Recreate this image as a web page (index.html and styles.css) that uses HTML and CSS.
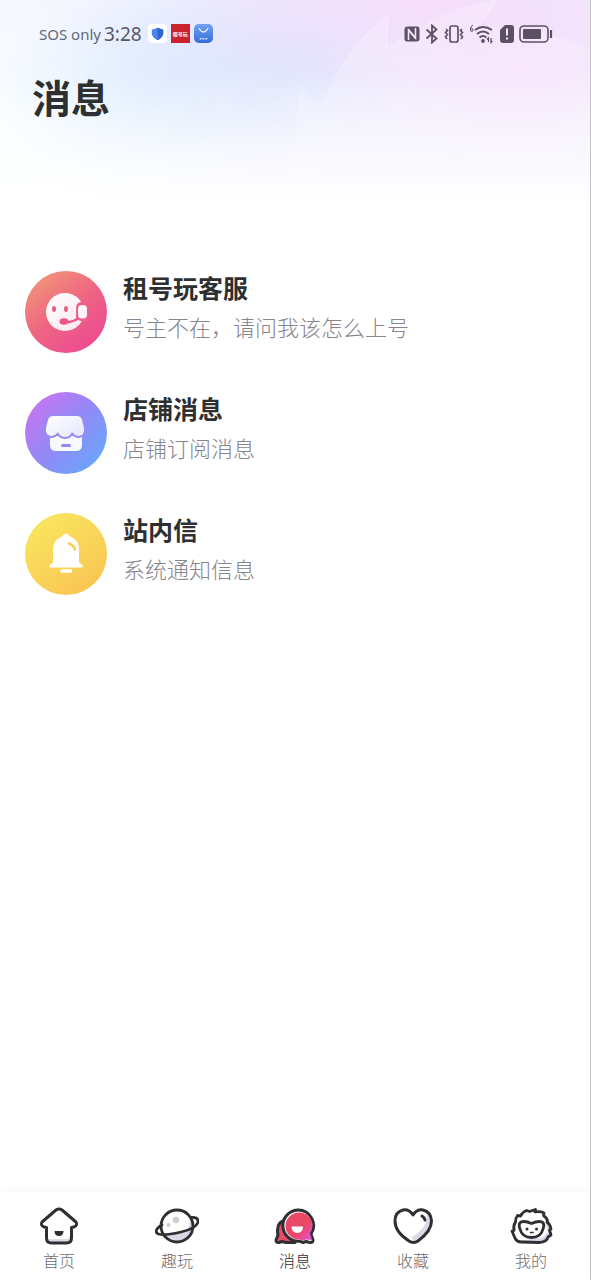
FILE: index.html
```html
<!DOCTYPE html>
<html lang="zh-CN">
<head>
<meta charset="utf-8">
<meta name="viewport" content="width=device-width, initial-scale=1">
<title>消息</title>
<link rel="stylesheet" href="styles.css">
</head>
<body>
<div class="page">
  <header class="header">
    <svg class="header-art" viewBox="0 0 591 210" preserveAspectRatio="xMaxYMin slice" aria-hidden="true">
      <defs>
        <linearGradient id="art" x1="0" y1="0" x2="0" y2="1">
          <stop offset="0" stop-color="#fff" stop-opacity=".2"/>
          <stop offset=".6" stop-color="#fff" stop-opacity=".2"/>
          <stop offset="1" stop-color="#fff" stop-opacity="0"/>
        </linearGradient>
      </defs>
      <path fill="url(#art)" d="M300 210Q293 130 304 84Q311 97 319 104Q324 104 329 96Q348 48 390 15L389 48Q432 15 497 0Q491 14 477 27Q538 25 591 48V210Z"/>
      <path fill="none" stroke="#fff" stroke-opacity=".3" d="M329 96Q348 48 390 15L389 48M432 22Q460 7 497 1Q491 14 477 27M560 40Q575 50 591 53M562 65Q580 69 591 82"/>
    </svg>
    <div class="status">
      <div class="status-left">
        <span class="carrier">SOS only</span>
        <span class="clock">3:28</span>
        <svg class="app" viewBox="0 0 20 20" aria-hidden="true"><rect width="20" height="20" rx="4" fill="#fff"/><path fill="#4a86ec" d="M10 4l6 2v4q0 4-6 7-6-3-6-7V6z"/><path fill="#3264d2" d="M10 4l6 2v4q0 4-6 7z"/></svg>
        <span class="app app-red">租号玩</span>
        <svg class="app" viewBox="0 0 20 20" aria-hidden="true"><defs><linearGradient id="store" x2="0" y2="1"><stop stop-color="#72a3ef"/><stop offset="1" stop-color="#376cdc"/></linearGradient></defs><rect width="20" height="20" rx="5" fill="url(#store)"/><path d="M5.500 5q4.500 7 9 0" fill="none" stroke="#fff" stroke-width="1.300" stroke-linecap="round"/><path d="M6 15.500h2M9 15.500h2M12 15.500h2" stroke="#dce9ff" stroke-width="1.500"/></svg>
      </div>
      <div class="status-right">
        <svg width="16" height="18" viewBox="0 0 16 18" aria-label="NFC"><path d="M4 1.500h9q2.500 0 2.500 3V14q0 2.500-3 2.500H3Q.5 16.500.5 14V4.500q0-3 3.500-3z" fill="#5c5163"/><path d="M4.500 15V5l7 8.500M11.500 3v10L4.500 4.500" fill="none" stroke="#f2e6fb" stroke-width="1.600"/></svg>
        <svg width="14" height="20" viewBox="0 0 14 20" aria-label="蓝牙"><path d="M1.500 5.500l10 9L7 18.500v-17l4.500 4-10 9" fill="none" stroke="#5c5163" stroke-width="1.800"/></svg>
        <svg width="20" height="20" viewBox="0 0 20 20" aria-label="振动"><rect x="6" y="2" width="8" height="16" rx="2" fill="none" stroke="#5c5163" stroke-width="1.700"/><path d="M2 5l1.500 1.500L1.500 8.500 3.500 10.500 1.500 12.500 3 15M18 5l-1.500 1.500 2 2-2 2 2 2L17 15" fill="none" stroke="#5c5163" stroke-width="1.600"/></svg>
        <svg width="26" height="20" viewBox="0 0 26 20" aria-label="Wi-Fi 6"><path d="M4 1Q1.500 2 1.500 5v1q0 1.500 1.300 1.500T4.100 6 2.800 4.500 1.500 6" fill="none" stroke="#5c5163"/><g fill="none" stroke="#5c5163" stroke-width="2"><path d="M6 6q8-6 17 0M8 10q6-5 12 0M10.500 13.500q3.500-3 7 0"/></g><circle cx="14" cy="17" r="1.900" fill="#5c5163"/><path d="M19.500 18v-4l-1.500 1.500M22 14v4.500l1.500-1.500" fill="none" stroke="#5c5163" stroke-width="1.200"/></svg>
        <svg width="14" height="18" viewBox="0 0 14 18" aria-label="SIM 卡异常"><path fill="#5c5163" d="M5 0h6q3 0 3 3v12q0 3-3 3H3q-3 0-3-3V5z"/><path d="M7 3.500v7M7 12.500v2" stroke="#f2e6fb" stroke-width="2"/></svg>
        <svg width="34" height="18" viewBox="0 0 34 18" aria-label="电量"><rect x="1" y="1" width="28" height="16" rx="4" fill="none" stroke="#5c5163" stroke-width="1.600"/><rect x="4" y="4" width="18" height="10" rx="1" fill="#5c5163"/><path d="M32 5v8" stroke="#5c5163" stroke-width="2.200"/></svg>
      </div>
    </div>
    <h1 class="title">消息</h1>
  </header>

  <main class="list">
    <a class="item" href="#service">
      <svg class="avatar" viewBox="0 0 82 82" aria-hidden="true">
        <defs><linearGradient id="g1" x1=".15" y1=".1" x2=".8" y2=".95"><stop stop-color="#f1917a"/><stop offset=".5" stop-color="#ee6482"/><stop offset="1" stop-color="#ec4a92"/></linearGradient>
        <linearGradient id="w1" x2="1" y2="1"><stop stop-color="#fff"/><stop offset="1" stop-color="#fbe6f0"/></linearGradient></defs>
        <circle cx="41" cy="41" r="41" fill="url(#g1)"/>
        <circle cx="40" cy="41" r="19" fill="url(#w1)"/>
        <ellipse cx="29" cy="38" rx="2" ry="3" fill="#e9607f"/><ellipse cx="41" cy="38" rx="2" ry="3" fill="#e9607f"/>
        <path d="M51 37q0-5 5-6h7v19h-7q-5-1-5-5z" fill="#ed6186"/>
        <path d="M53 47q-4 4.500-14 4" fill="none" stroke="#eb5588" stroke-width="2.500"/>
        <ellipse cx="39" cy="50.500" rx="4.500" ry="3.300" fill="#eb5588"/>
        <rect x="53" y="34" width="9" height="13.500" rx="4" fill="#fff5fa"/>
      </svg>
      <div class="item-text"><h2 class="item-title">租号玩客服</h2><p class="item-desc">号主不在，请问我该怎么上号</p></div>
    </a>
    <a class="item" href="#shop">
      <svg class="avatar" viewBox="0 0 82 82" aria-hidden="true">
        <defs><linearGradient id="g2" x1=".12" y1=".15" x2=".88" y2=".85"><stop stop-color="#c177f1"/><stop offset=".5" stop-color="#9389f7"/><stop offset="1" stop-color="#6ca4fb"/></linearGradient>
        <linearGradient id="w2" x2="1" y2="1"><stop stop-color="#fff"/><stop offset="1" stop-color="#e4e6fd"/></linearGradient></defs>
        <circle cx="41" cy="41" r="41" fill="url(#g2)"/>
        <path d="M25 43h32v10q0 6-6 6H31q-6 0-6-6z" fill="#f8f8ff"/>
        <path d="M28 24h24q4 0 5 4l2 8q1 7-5 8-4 0-7-4-2 5-7 5t-7-5q-3 4-7 4-6-1-5-8l2-8q1-4 5-4z" fill="url(#w2)" stroke="#948bf5" stroke-width="4" paint-order="stroke"/>
        <path d="M37.500 53.500h7" stroke="#9288f4" stroke-width="3" stroke-linecap="round"/>
      </svg>
      <div class="item-text"><h2 class="item-title">店铺消息</h2><p class="item-desc">店铺订阅消息</p></div>
    </a>
    <a class="item" href="#inbox">
      <svg class="avatar" viewBox="0 0 82 82" aria-hidden="true">
        <defs><linearGradient id="g3" x1=".2" y1=".05" x2=".8" y2=".95"><stop stop-color="#f9e55f"/><stop offset="1" stop-color="#f9c553"/></linearGradient></defs>
        <circle cx="41" cy="41" r="41" fill="url(#g3)"/>
        <path d="M37 23.500q2-3 4-3t4 3q9 3 9 13v13l3 2q2 3-1 3H26q-3 0-1-3l3-2v-13q0-10 9-13z" fill="#fff"/>
        <path d="M44 30.500q4.500 1.500 6 6" fill="none" stroke="#f6ce59" stroke-width="2.600" stroke-linecap="round"/>
        <path d="M37 58h8.500" stroke="#fff" stroke-width="3.600" stroke-linecap="round"/>
      </svg>
      <div class="item-text"><h2 class="item-title">站内信</h2><p class="item-desc">系统通知信息</p></div>
    </a>
  </main>

  <nav class="tabs">
    <a class="tab" href="#home">
      <svg class="tab-icon" viewBox="0 0 44 40" aria-hidden="true"><path d="M26 5l12 11q2 3-2 5l-3 .5V29q0 4-4 4H11q1 3 4 3h14q5 0 5-5V21.500l3-.5q3-2 1-5z" fill="#d9dae6"/><path d="M19 4q3-2 6 0l14 12q2 3-2 5l-2.500.5V32q0 5-5 5h-15q-5 0-5-5V21.500L7 21q-4-2-2-5z" fill="none" stroke="#2d2f31" stroke-width="3" stroke-linejoin="round"/><path d="M17.500 25h9q0 5-4.500 5t-4.500-5z" fill="#2d2f31"/></svg>
      <span>首页</span>
    </a>
    <a class="tab" href="#fun">
      <svg class="tab-icon" viewBox="0 0 44 40" aria-hidden="true"><path d="M34 9q2 13-4 16t-18 5q14 10 23 1 7-12-1-22z" fill="#d9dae6"/><circle cx="21" cy="14" r="3.200" fill="#cfcfd2"/><circle cx="13.500" cy="19" r="2" fill="#cfcfd2"/><circle cx="22" cy="20" r="16" fill="none" stroke="#2d2f31" stroke-width="2.800"/><path d="M36 11.500q7-.5 7 3.500 0 7-17 11Q4 31 1.500 26.500 0 23 7 19" fill="none" stroke="#2d2f31" stroke-width="2.800" stroke-linecap="round"/></svg>
      <span>趣玩</span>
    </a>
    <a class="tab tab-active" href="#messages" aria-current="page">
      <svg class="tab-icon" viewBox="0 0 44 40" aria-hidden="true"><defs><linearGradient id="msg" x1=".3" y1=".3" x2="1" y2="1"><stop offset=".4" stop-color="#ea4864"/><stop offset="1" stop-color="#e451df"/></linearGradient></defs><path d="M13 14q-8 1-8.500 10 0 3 .5 5l-2 5q0 3 3 2.500l3-1 4 1h9z" fill="#e84b67" stroke="#2d2f31" stroke-width="3" stroke-linejoin="round"/><path d="M24.500 4A15.500 15.500 0 0 1 38 28l2 6q0 3-3 2.500l-4-1-3 1-3.500-1.300A15.500 15.500 0 1 1 24.500 4z" fill="#fff" stroke="#2d2f31" stroke-width="3" stroke-linejoin="round"/><path d="M26 6.500A13 13 0 0 1 37 27l2 7-6-.5-3 1-4-1A13.500 13.500 0 0 1 26 6.500z" fill="url(#msg)"/><path d="M18.500 20.500H30q0 6.500-5.700 6.500t-5.800-6.500z" fill="#fff"/></svg>
      <span>消息</span>
    </a>
    <a class="tab" href="#favorites">
      <svg class="tab-icon" viewBox="0 0 44 40" aria-hidden="true"><path d="M36 6q2 15-15 25l1 5q4 1 8-3 10-8 10-17 0-7-4-10z" fill="#d9dae6"/><path d="M22 9q4-6 10-5 8 2 8.500 11 0 10-13.500 20-4.500 3-9 0Q4 26 4 15 4 6 12 4q6-1 10 5z" fill="none" stroke="#2d2f31" stroke-width="3" stroke-linejoin="round"/><path d="M31 10q2.500 1.500 3 4" fill="none" stroke="#2d2f31" stroke-width="3" stroke-linecap="round"/></svg>
      <span>收藏</span>
    </a>
    <a class="tab" href="#mine">
      <svg class="tab-icon" viewBox="0 0 44 40" aria-hidden="true"><path d="M36 16l3 10-6 6-18 2-4 2h20q7 0 8-5l3-3-1-5 1-3z" fill="#d9dae6"/><path d="M13 36q-6 0-7.500-5L3 25l2-.500Q4 20 6.500 16q0-4 2-6.500l3 .5q2-4 6-5.500l3 1 6-2-.5 2.500q5-1 9 1l-.5 2.500q3 2 4 5l-.5 1.500q3 2 4 7l-1.500 1 1.500 5-3 2q-1 5-9 5.500z" fill="none" stroke="#2d2f31" stroke-width="2.800" stroke-linejoin="round"/><path d="M12 16q4-1.500 10.500 1.500Q29 14.500 33 16q3 2 1 7-2 8.500-11.500 8.500T11 23q-2-5 1-7z" fill="#fff" stroke="#2d2f31" stroke-width="2.800"/><circle cx="18" cy="23" r="1.500" fill="#2d2f31"/><circle cx="27.500" cy="23" r="1.500" fill="#2d2f31"/><path d="M21.500 26.500h2.500" stroke="#2d2f31" stroke-width="1.600" stroke-linecap="round"/></svg>
      <span>我的</span>
    </a>
  </nav>
</div>
</body>
</html>
```
FILE: styles.css
```css
* { box-sizing: border-box; }
body, h1, h2, p { margin: 0; }
body {
  font-family: "Noto Sans", "Noto Sans CJK SC", sans-serif;
  background: #fff;
  color: #2d2f31;
}
a { color: inherit; text-decoration: none; }
svg { display: block; flex: none; }
.page {
  display: flex;
  flex-direction: column;
  min-height: 100vh;
  border-right: 1px solid #c4c4c8;
}
.header {
  position: relative;
  padding-bottom: 82px;
  background:
    linear-gradient(to bottom, rgba(255,255,255,0) 35%, #fff 97%),
    radial-gradient(ellipse 45% 45% at 72% 0, #f6ddfb, rgba(246,221,251,0)),
    radial-gradient(ellipse 34% 50% at 88% 36%, #f6e0fb, rgba(246,224,251,0)),
    radial-gradient(ellipse 36% 50% at 48% 26%, #dfe5fd, rgba(223,229,253,0)),
    radial-gradient(ellipse 30% 55% at 29% 45%, #deeefe, rgba(222,238,254,0)),
    radial-gradient(ellipse 40% 70% at 0 70%, #f8ffff, rgba(248,255,255,0)),
    linear-gradient(to right, #f6f8ff, #eeebfd 60%);
}
.header-art {
  position: absolute;
  inset: 0;
  width: 100%;
  height: 100%;
}
.status {
  position: relative;
  display: flex;
  align-items: center;
  justify-content: space-between;
  height: 67px;
  padding: 0 37px 0 39px;
}
.status-left { display: flex; align-items: center; gap: 3px; }
.status-right { display: flex; align-items: center; gap: 5px; }
.carrier { font-size: 15px; color: #66677a; white-space: nowrap; }
.clock { font-size: 19px; color: #56576a; margin-right: 3px; }
.app { width: 19px; height: 19px; margin-right: 1px; }
.app-red {
  display: flex;
  align-items: center;
  justify-content: center;
  background: #c9232d;
  color: #fff;
  font-size: 5px;
  font-weight: 700;
  white-space: nowrap;
}
.title {
  position: relative;
  padding-left: 32px;
  font-size: 39px;
  line-height: 62px;
  font-weight: 600;
}
.list {
  flex: 1;
  display: flex;
  flex-direction: column;
  gap: 39px;
  padding: 60px 25px 40px;
}
.item { display: flex; gap: 16px; }
.avatar { width: 82px; height: 82px; }
.item-text { display: flex; flex-direction: column; gap: 6px; }
.item-title { font-size: 25px; line-height: 34px; font-weight: 600; }
.item-desc { font-size: 22px; line-height: 32px; font-weight: 300; color: #85858e; }
.tabs {
  display: flex;
  padding: 14px 0 7px;
  background: #fff;
  box-shadow: 0 -2px 8px rgba(0,0,0,0.04);
}
.tab {
  flex: 1;
  display: flex;
  flex-direction: column;
  align-items: center;
  gap: 3px;
  font-size: 16px;
  line-height: 24px;
  font-weight: 300;
  color: #6c6c71;
}
.tab-icon { width: 44px; height: 40px; }
.tab-active { color: #2d2f31; }
```
